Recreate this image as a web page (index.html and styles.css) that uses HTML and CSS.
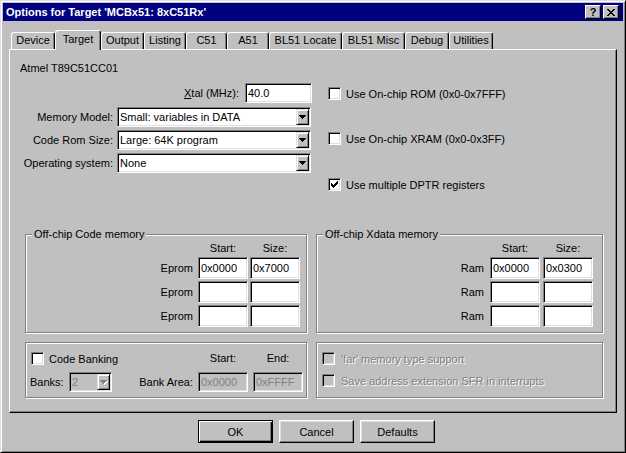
FILE: index.html
```html
<!DOCTYPE html>
<html lang="en">
<head>
  <meta charset="UTF-8" />
  <title>Options for Target</title>
  <link rel="stylesheet" href="styles.css">
</head>
<body>

  <div class="window">
    <div class="titlebar">
      <span class="title">Options for Target 'MCBx51: 8xC51Rx'</span>
      <div class="title-buttons">
        <span class="tbtn">?</span>
        <span class="tbtn">
          <svg width="8" height="7" viewBox="0 0 8 7"><path d="M0 0h2v1H0zM6 0h2v1H6zM1 1h2v1H1zM5 1h2v1H5zM2 2h4v1H2zM3 3h2v1H3zM2 4h4v1H2zM1 5h2v1H1zM5 5h2v1H5zM0 6h2v1H0zM6 6h2v1H6z"/></svg>
        </span>
      </div>
    </div>

    <div class="tabs">
      <div class="tab">Device</div>
      <div class="tab active">Target</div>
      <div class="tab">Output</div>
      <div class="tab">Listing</div>
      <div class="tab">C51</div>
      <div class="tab">A51</div>
      <div class="tab">BL51 Locate</div>
      <div class="tab">BL51 Misc</div>
      <div class="tab">Debug</div>
      <div class="tab">Utilities</div>
    </div>

    <div class="panel">
      <div class="device">Atmel T89C51CC01</div>

      <div class="top">
        <div class="settings">
          <div class="xtal">
            <span><u>X</u>tal (MHz):</span>
            <span class="field xtal-field">40.0</span>
          </div>

          <span class="lbl">Memory Model:</span>
          <span class="combo">
            <span class="combo-text">Small: variables in DATA</span>
            <span class="drop"><svg width="7" height="4" viewBox="0 0 7 4"><path d="M0 0h7v1H0zM1 1h5v1H1zM2 2h3v1H2zM3 3h1v1H3z"/></svg></span>
          </span>

          <span class="lbl">Code Rom Size:</span>
          <span class="combo">
            <span class="combo-text">Large: 64K program</span>
            <span class="drop"><svg width="7" height="4" viewBox="0 0 7 4"><path d="M0 0h7v1H0zM1 1h5v1H1zM2 2h3v1H2zM3 3h1v1H3z"/></svg></span>
          </span>

          <span class="lbl">Operating system:</span>
          <span class="combo">
            <span class="combo-text">None</span>
            <span class="drop"><svg width="7" height="4" viewBox="0 0 7 4"><path d="M0 0h7v1H0zM1 1h5v1H1zM2 2h3v1H2zM3 3h1v1H3z"/></svg></span>
          </span>
        </div>

        <div class="options">
          <div class="opt"><span class="check"></span>Use On-chip ROM (0x0-0x7FFF)</div>
          <div class="opt"><span class="check"></span>Use On-chip XRAM (0x0-0x3FF)</div>
          <div class="opt"><span class="check"><svg width="7" height="7" viewBox="0 0 7 7"><path d="M6 0h1v1H6zM5 1h2v1H5zM0 2h1v1H0zM4 2h3v1H4zM0 3h2v1H0zM3 3h3v1H3zM0 4h5v1H0zM1 5h3v1H1zM2 6h1v1H2z"/></svg></span>Use multiple DPTR registers</div>
        </div>
      </div>

      <div class="groups">
        <div class="group">
          <span class="legend">Off-chip Code memory</span>
          <div class="mem code">
            <span></span><span class="hdr">Start:</span><span class="hdr">Size:</span>
            <span class="rowlbl">Eprom</span><span class="field mem-field">0x0000</span><span class="field mem-field">0x7000</span>
            <span class="rowlbl">Eprom</span><span class="field mem-field"></span><span class="field mem-field"></span>
            <span class="rowlbl">Eprom</span><span class="field mem-field"></span><span class="field mem-field"></span>
          </div>
        </div>

        <div class="group">
          <span class="legend">Off-chip Xdata memory</span>
          <div class="mem xdata">
            <span></span><span class="hdr">Start:</span><span class="hdr">Size:</span>
            <span class="rowlbl">Ram</span><span class="field mem-field">0x0000</span><span class="field mem-field">0x0300</span>
            <span class="rowlbl">Ram</span><span class="field mem-field"></span><span class="field mem-field"></span>
            <span class="rowlbl">Ram</span><span class="field mem-field"></span><span class="field mem-field"></span>
          </div>
        </div>

        <div class="group">
          <div class="bank">
            <div class="opt bank-check"><span class="check"></span>Code Banking</div>
            <span class="hdr">Start:</span>
            <span class="hdr">End:</span>

            <div class="banks">
              <span>Banks:</span>
              <span class="combo disabled-box banks-combo">
                <span class="combo-text">2</span>
                <span class="drop"><svg width="8" height="5" viewBox="0 0 8 5"><path fill="#fff" d="M1 1h7v1H1zM2 2h5v1H2zM3 3h3v1H3zM4 4h1v1H4z"/><path fill="#808080" d="M0 0h7v1H0zM1 1h5v1H1zM2 2h3v1H2zM3 3h1v1H3z"/></svg></span>
              </span>
            </div>
            <span class="lbl">Bank Area:</span>
            <span class="field disabled-box">0x0000</span>
            <span class="field disabled-box">0xFFFF</span>
          </div>
        </div>

        <div class="group">
          <div class="far">
            <div class="opt"><span class="check disabled-box"></span><span class="disabled">'far' memory type support</span></div>
            <div class="opt"><span class="check disabled-box"></span><span class="disabled">Save address extension SFR in interrupts</span></div>
          </div>
        </div>
      </div>
    </div>

    <div class="buttons">
      <div class="btn default">OK</div>
      <div class="btn">Cancel</div>
      <div class="btn">Defaults</div>
    </div>
  </div>

</body>
</html>
```

FILE: styles.css
```css
body {
  margin: 0;
  background: #c0c0c0;
  font-family: "Liberation Sans", Arial, sans-serif;
  font-size: 11px;
  color: #000;
}

.window {
  width: 626px;
  height: 453px;
  box-sizing: border-box;
  padding: 2px;
  border: 1px solid;
  border-color: #dfdfdf #000 #000 #dfdfdf;
  box-shadow: inset 1px 1px #fff, inset -1px -1px #808080;
  background: #c0c0c0;
}

/* title bar */
.titlebar {
  height: 18px;
  background: #000080;
  color: #fff;
  display: flex;
  align-items: center;
  justify-content: space-between;
  padding: 0 4px 0 3px;
}

.title {
  font-weight: bold;
}

.title-buttons {
  display: flex;
  gap: 2px;
}

.tbtn {
  width: 16px;
  height: 14px;
  box-sizing: border-box;
  display: flex;
  align-items: center;
  justify-content: center;
  background: #c0c0c0;
  color: #000;
  font-weight: bold;
  border: 1px solid;
  border-color: #fff #000 #000 #fff;
  box-shadow: inset -1px -1px #808080;
}

/* tabs */
.tabs {
  display: grid;
  grid-template-columns: 44px 46px 43px 42px 41px 42px 73px 63px 44px 44px;
  align-items: end;
  height: 19px;
  margin: 9px 0 0 8px;
  position: relative;
  z-index: 1;
}

.tab {
  height: 17px;
  box-sizing: border-box;
  border: 1px solid #fff;
  border-bottom: none;
  border-right-color: #000;
  border-radius: 3px 3px 0 0;
  box-shadow: inset -1px 0 #808080;
  line-height: 15px;
  text-align: center;
  white-space: nowrap;
}

.tab.active {
  height: 20px;
  margin-bottom: -1px;
  background: #c0c0c0;
  line-height: 16px;
}

.panel {
  height: 364px;
  box-sizing: border-box;
  margin: 0 6px;
  border: 1px solid;
  border-color: #fff #000 #000 #fff;
  box-shadow: inset -1px -1px #808080;
  padding: 12px 0 0 10px;
}

.device {
  line-height: 13px;
}

.top {
  display: grid;
  grid-template-columns: 291px 1fr;
  column-gap: 17px;
  align-items: start;
  margin-top: 8px;
}

.settings {
  display: grid;
  grid-template-columns: 93px 194px;
  column-gap: 4px;
  row-gap: 3px;
  align-items: center;
}

.xtal {
  grid-column: 1 / -1;
  display: flex;
  justify-content: flex-end;
  align-items: center;
  gap: 6px;
  margin: 0 -1px 1px 0;
}

.lbl {
  text-align: right;
  white-space: nowrap;
}

/* sunken edit field */
.field {
  box-sizing: border-box;
  height: 20px;
  border: 1px solid;
  border-color: #808080 #fff #fff #808080;
  box-shadow: inset 1px 1px #000, inset -1px -1px #dfdfdf;
  background: #fff;
  padding: 0 2px;
  line-height: 18px;
  white-space: nowrap;
}

.xtal-field {
  width: 67px;
}

.combo {
  box-sizing: border-box;
  height: 20px;
  display: flex;
  padding: 1px;
  border: 1px solid;
  border-color: #808080 #fff #fff #808080;
  box-shadow: inset 1px 1px #000, inset -1px -1px #dfdfdf;
  background: #fff;
}

.combo-text {
  flex: 1;
  padding-left: 1px;
  line-height: 16px;
}

.drop {
  width: 13px;
  height: 16px;
  box-sizing: border-box;
  display: flex;
  align-items: center;
  justify-content: center;
  background: #c0c0c0;
  border: 1px solid;
  border-color: #dfdfdf #000 #000 #dfdfdf;
  box-shadow: inset 1px 1px #fff, inset -1px -1px #808080;
}

.options {
  display: flex;
  flex-direction: column;
  gap: 32px;
  padding-top: 4px;
}

.opt {
  display: flex;
  align-items: center;
  gap: 5px;
  height: 13px;
  white-space: nowrap;
}

.options .opt:last-child {
  margin-top: 1px;
}

.check {
  width: 13px;
  height: 13px;
  box-sizing: border-box;
  flex: none;
  display: flex;
  align-items: center;
  justify-content: center;
  border: 1px solid;
  border-color: #808080 #fff #fff #808080;
  box-shadow: inset 1px 1px #000, inset -1px -1px #dfdfdf;
  background: #fff;
}

.disabled-box {
  background: #c0c0c0;
  color: #808080;
}

.disabled {
  color: #808080;
  text-shadow: 1px 1px #fff;
}

/* group boxes */
.groups {
  display: grid;
  grid-template-columns: 282px 287px;
  grid-template-rows: 99px 56px;
  gap: 9px;
  margin: 43px 0 0 5px;
}

.group {
  position: relative;
  box-sizing: border-box;
  border: 1px solid #808080;
  box-shadow: inset 1px 1px #fff, 1px 1px #fff;
}

.legend {
  position: absolute;
  top: -7px;
  left: 6px;
  padding: 0 2px;
  background: #c0c0c0;
  line-height: 13px;
}

.mem {
  display: grid;
  grid-template-columns: 1fr 50px 50px;
  grid-template-rows: 14px 22px 22px 22px;
  column-gap: 2px;
  row-gap: 2px;
  padding: 6px 6px 0 0;
}

.mem.xdata {
  column-gap: 3px;
  padding-right: 9px;
}

.mem-field {
  height: 22px;
  line-height: 20px;
}

.hdr {
  text-align: center;
  line-height: 13px;
}

.mem .hdr {
  line-height: 14px;
}

.rowlbl {
  text-align: right;
  padding-right: 3px;
  align-self: center;
}

.bank {
  display: grid;
  grid-template-columns: 82px 1fr 50px 50px;
  grid-template-rows: 13px 20px;
  column-gap: 5px;
  row-gap: 7px;
  align-items: center;
  padding: 9px 3px 0 4px;
}

.bank-check {
  grid-column: 1 / 3;
  margin-left: 1px;
}

.banks {
  display: flex;
  justify-content: space-between;
  align-items: center;
}

.banks-combo {
  width: 43px;
}

.far {
  display: flex;
  flex-direction: column;
  gap: 9px;
  padding: 9px 0 0 5px;
}

.far .opt {
  gap: 6px;
}

/* push buttons */
.buttons {
  display: flex;
  justify-content: center;
  gap: 6px;
  margin-top: 7px;
  padding-left: 7px;
}

.btn {
  width: 75px;
  height: 23px;
  box-sizing: border-box;
  display: flex;
  align-items: center;
  justify-content: center;
  border: 1px solid;
  border-color: #fff #000 #000 #fff;
  box-shadow: inset -1px -1px #808080, inset 1px 1px #dfdfdf;
}

.btn.default {
  border-color: #000;
  box-shadow: inset 1px 1px #fff, inset -1px -1px #000, inset -2px -2px #808080;
}
```
